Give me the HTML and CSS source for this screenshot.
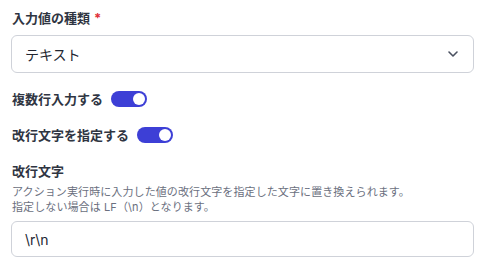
FILE: index.html
```html
<!DOCTYPE html>
<html lang="ja">
<head>
<meta charset="utf-8">
<link rel="stylesheet" href="styles.css">
</head>
<body>
<div class="form">
  <div class="field">
    <div class="label">入力値の種類<span class="req">*</span></div>
    <div class="select">
      <span class="value">テキスト</span>
      <svg class="chev" width="12" height="8" viewBox="0 0 12 8"><path d="M2 2 L6 6 L10 2" fill="none" stroke="#4a5160" stroke-width="1.6" stroke-linecap="round" stroke-linejoin="round"/></svg>
    </div>
  </div>
  <div class="toggle-row">
    <span class="label">複数行入力する</span>
    <span class="toggle"><span class="knob"></span></span>
  </div>
  <div class="toggle-row">
    <span class="label">改行文字を指定する</span>
    <span class="toggle"><span class="knob"></span></span>
  </div>
  <div class="field">
    <div class="label">改行文字</div>
    <p class="desc">アクション実行時に入力した値の改行文字を指定した文字に置き換えられます。<br>指定しない場合は LF（\n）となります。</p>
    <div class="input"><span class="value">\r\n</span></div>
  </div>
</div>
</body>
</html>
```
FILE: styles.css
```css
html, body {
  margin: 0;
  padding: 0;
  background: #ffffff;
}
body {
  font-family: Inter, "Noto Sans CJK JP", sans-serif;
  color: #2f3542;
}
.form {
  width: 463px;
  padding: 8px 0 0 11px;
  display: flex;
  flex-direction: column;
}
.label {
  font-size: 13px;
  font-weight: 700;
  line-height: 20px;
  padding-left: 1px;
  color: #2f3542;
}
.req {
  color: #e0303a;
  margin-left: 4px;
}
.select, .input {
  box-sizing: border-box;
  border: 1px solid #cfd2d9;
  border-radius: 6px;
  display: flex;
  align-items: center;
  justify-content: space-between;
  padding: 0 14px 0 13px;
}
.select {
  height: 38px;
  margin-top: 7px;
}
.input {
  height: 36px;
  margin-top: 6px;
}
.value {
  font-size: 14px;
  color: #222631;
}
.chev {
  display: block;
}
.toggle-row {
  display: flex;
  align-items: center;
  gap: 8px;
  margin-top: 16px;
  height: 20px;
}
.toggle {
  width: 36px;
  height: 16px;
  border-radius: 8px;
  background: #3d3fd6;
  display: flex;
  align-items: center;
  justify-content: flex-end;
  padding: 0 2px;
  box-sizing: border-box;
}
.knob {
  width: 12px;
  height: 12px;
  border-radius: 50%;
  background: #ffffff;
}
.toggle-row + .field {
  margin-top: 16px;
}
.desc {
  margin: 4px 0 0 1px;
  font-size: 11px;
  line-height: 15px;
  color: #6b7080;
  letter-spacing: 0.1px;
}
```
